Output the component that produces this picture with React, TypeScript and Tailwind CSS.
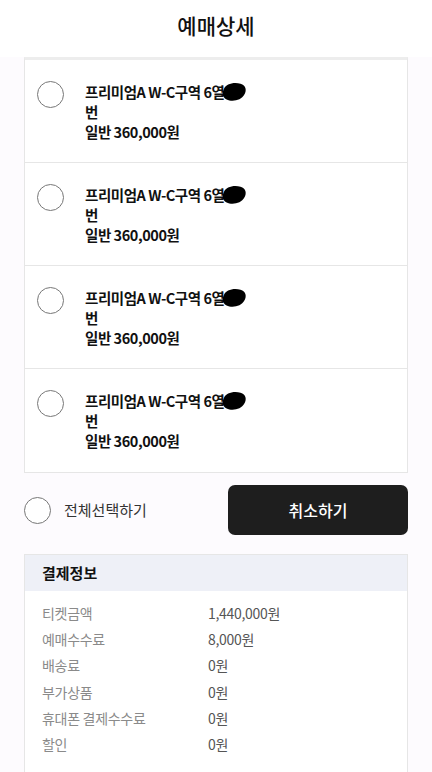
import React from 'react';

const font = { fontFamily: '"Noto Sans CJK KR", "Noto Sans", sans-serif' };

const Radio = () => (
  <div className="w-[27px] h-[27px] rounded-full border border-[#777] bg-white shrink-0" />
);

const Blob = () => (
  <svg width="26" height="22" viewBox="0 0 28 22" className="ml-[-3px] mt-[-1px] shrink-0">
    <path d="M3 8 C5 2 14 0 21 2 C27 4 28 9 25 14 C22 20 12 22 6 19 C1 16 1 12 3 8 Z" fill="#000" />
  </svg>
);

const SeatItem = ({ last }: { last?: boolean }) => (
  <div className={`flex items-start gap-[21px] pl-[12px] pt-[21px] h-[103px] ${last ? '' : 'border-b border-[#e6e6e6]'}`}>
    <Radio />
    <div className="text-[14.5px] tracking-[-0.45px] leading-[20px] font-bold text-[#111] pt-[1px]">
      <div className="flex items-start h-[20px]">
        <span>프리미엄A W-C구역 6열</span>
        <Blob />
      </div>
      <div>번</div>
      <div>일반 360,000원</div>
    </div>
  </div>
);

const rows: [string, string][] = [
  ['티켓금액', '1,440,000원'],
  ['예매수수료', '8,000원'],
  ['배송료', '0원'],
  ['부가상품', '0원'],
  ['휴대폰 결제수수료', '0원'],
  ['할인', '0원'],
];

export default function App() {
  return (
    <div className="w-[432px] h-[772px] overflow-hidden bg-[#fdfbfe]" style={font}>
      <header className="h-[57px] bg-white flex items-center justify-center">
        <h1 className="text-[21px] font-medium text-[#111] pb-[6px]">예매상세</h1>
      </header>
      <div className="mx-[24px] bg-white border-x border-b border-[#e6e6e6] border-t-[3px] border-t-[#ededed]">
        <SeatItem />
        <SeatItem />
        <SeatItem />
        <SeatItem last />
      </div>
      <div className="mx-[24px] mt-[12px] flex items-center justify-between">
        <div className="flex items-center gap-[13px]">
          <Radio />
          <span className="text-[15px] text-[#333]">전체선택하기</span>
        </div>
        <button className="w-[180px] h-[50px] rounded-[7px] bg-[#1e1e1e] text-white text-[16px] font-medium">
          취소하기
        </button>
      </div>
      <div className="mx-[24px] mt-[19px] bg-white border border-[#e6e6e6]">
        <div className="h-[36px] bg-[#eef0f7] flex items-center pl-[17px] text-[15px] font-bold text-[#111]">
          결제정보
        </div>
        <div className="pt-[9px] pb-[14px]">
          {rows.map(([k, v]) => (
            <div key={k} className="flex h-[26.3px] items-center text-[14px] tracking-[-0.3px]">
              <span className="pl-[17px] w-[183px] text-[#8a8a8a]">{k}</span>
              <span className="text-[#555]">{v}</span>
            </div>
          ))}
        </div>
      </div>
    </div>
  );
}
